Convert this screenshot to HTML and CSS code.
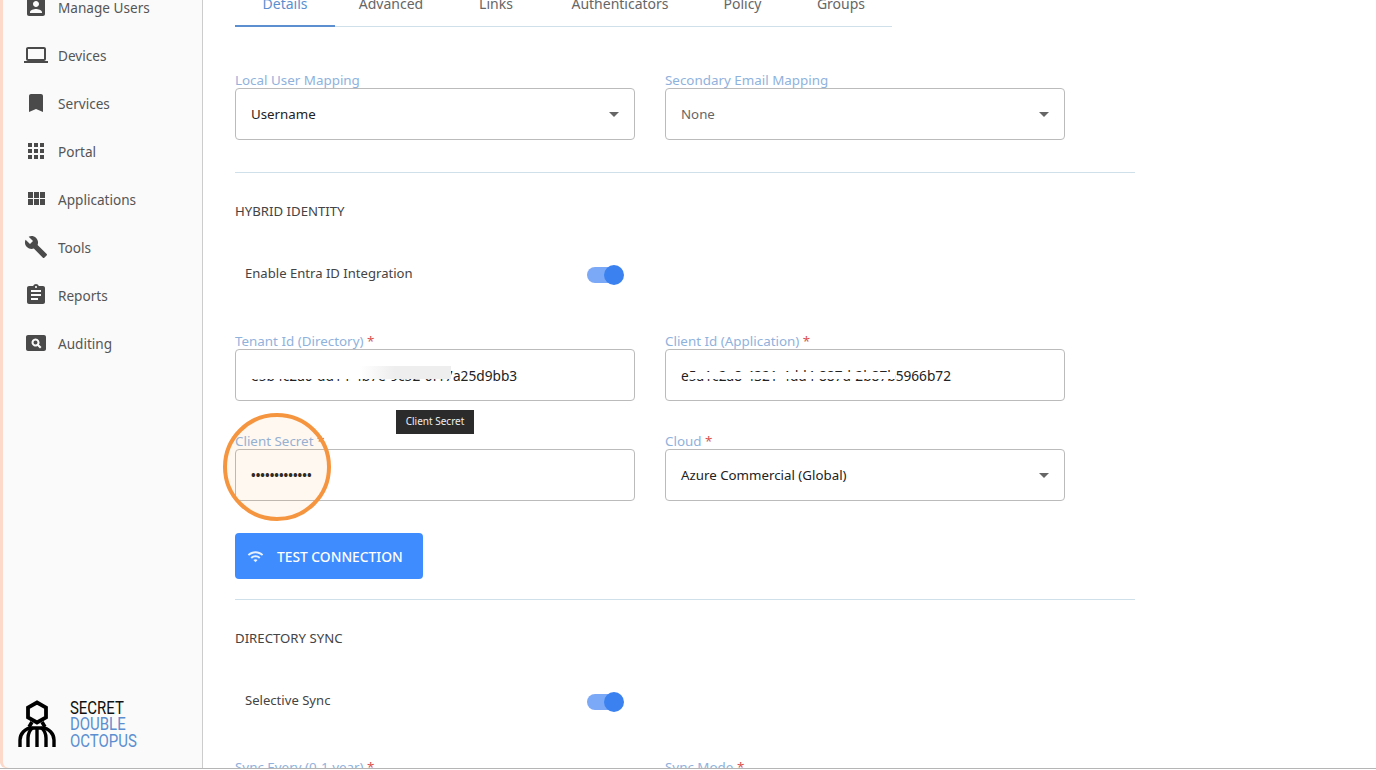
FILE: index.html
```html
<!DOCTYPE html>
<html lang="en">
<head>
    <meta charset="UTF-8">
    <meta name="viewport" content="width=device-width, initial-scale=1.0">
    <title>Directory Details</title>
    <link rel="stylesheet" href="styles.css">
</head>
<body>
    <div class="frame">
        <aside class="sidebar">
            <nav class="nav">
                <a class="nav-item"><svg class="nav-icon" viewBox="0 0 24 24"><path d="M3 5v14c0 1.1.89 2 2 2h14c1.1 0 2-.9 2-2V5c0-1.1-.9-2-2-2H5c-1.11 0-2 .9-2 2zm12 4c0 1.66-1.34 3-3 3s-3-1.34-3-3 1.34-3 3-3 3 1.34 3 3zm-9 8c0-2 4-3.1 6-3.1s6 1.1 6 3.1v1H6v-1z"/></svg>Manage Users</a>
                <a class="nav-item"><svg class="nav-icon" viewBox="0 0 24 24"><path d="M20 18c1.1 0 1.99-.9 1.99-2L22 6c0-1.1-.9-2-2-2H4c-1.1 0-2 .9-2 2v10c0 1.1.9 2 2 2H0v2h24v-2h-4zM4 6h16v10H4V6z"/></svg>Devices</a>
                <a class="nav-item"><svg class="nav-icon" viewBox="0 0 24 24"><path d="M17 3H7c-1.1 0-1.99.9-1.99 2L5 21l7-3 7 3V5c0-1.1-.9-2-2-2z"/></svg>Services</a>
                <a class="nav-item"><svg class="nav-icon" viewBox="0 0 24 24"><path d="M4 8h4V4H4v4zm6 12h4v-4h-4v4zm-6 0h4v-4H4v4zm0-6h4v-4H4v4zm6 0h4v-4h-4v4zm6-10v4h4V4h-4zm-6 4h4V4h-4v4zm6 6h4v-4h-4v4zm0 6h4v-4h-4v4z"/></svg>Portal</a>
                <a class="nav-item"><svg class="nav-icon" viewBox="0 0 24 24"><path d="M4 11h5V5H4v6zm0 7h5v-6H4v6zm6 0h5v-6h-5v6zm6 0h5v-6h-5v6zm-6-7h5V5h-5v6zm6-6v6h5V5h-5z"/></svg>Applications</a>
                <a class="nav-item"><svg class="nav-icon" viewBox="0 0 24 24"><path d="M22.7 19l-9.1-9.1c.9-2.3.4-5-1.5-6.9-2-2-5-2.4-7.4-1.3L9 6 6 9 1.6 4.7C.4 7.1.9 10.1 2.9 12.1c1.9 1.9 4.6 2.4 6.9 1.5l9.1 9.1c.4.4 1 .4 1.4 0l2.3-2.3c.5-.4.5-1.1.1-1.4z"/></svg>Tools</a>
                <a class="nav-item"><svg class="nav-icon" viewBox="0 0 24 24"><path d="M19 3h-4.18C14.4 1.84 13.3 1 12 1c-1.3 0-2.4.84-2.82 2H5c-1.1 0-2 .9-2 2v14c0 1.1.9 2 2 2h14c1.1 0 2-.9 2-2V5c0-1.1-.9-2-2-2zm-7 0c.55 0 1 .45 1 1s-.45 1-1 1-1-.45-1-1 .45-1 1-1zm2 14H7v-2h7v2zm3-4H7v-2h10v2zm0-4H7V7h10v2z"/></svg>Reports</a>
                <a class="nav-item"><svg class="nav-icon" viewBox="0 0 24 24"><path fill-rule="evenodd" d="M4 4h16c1.1 0 2 .9 2 2v12c0 1.1-.9 2-2 2H4c-1.1 0-2-.9-2-2V6c0-1.1.9-2 2-2zm7.5 3.5a4 4 0 1 0 2 7.46L16 17.5l1.5-1.5-2.54-2.5a4 4 0 0 0-3.46-6zm0 2a2 2 0 1 1 0 4 2 2 0 0 1 0-4z"/></svg>Auditing</a>
            </nav>
            <div class="logo">
                <svg class="logo-mark" viewBox="0 0 38 48" fill="none" stroke="#000">
                    <path stroke-width="3.8" d="M19 2.5l9 5v10l-9 5-9-5v-10z"/>
                    <path stroke-width="3.6" d="M14 22l-3 5M24 22l3 5"/>
                    <path stroke-width="3.4" d="M2 47v-7c0-6 5-12 12-12h10c7 0 12 6 12 12v7"/>
                    <path stroke-width="3.4" d="M10 47v-9c0-4 2-9 5-10M28 47v-9c0-4-2-9-5-10M19 47V28"/>
                </svg>
                <div class="logo-text">
                    <span class="logo-dark">SECRET</span>
                    <span>DOUBLE</span>
                    <span>OCTOPUS</span>
                </div>
            </div>
        </aside>

        <main class="main">
            <div class="tabs">
                <a class="tab active">Details</a>
                <a class="tab">Advanced</a>
                <a class="tab">Links</a>
                <a class="tab">Authenticators</a>
                <a class="tab">Policy</a>
                <a class="tab">Groups</a>
            </div>

            <div class="form-row first-row">
                <div class="field">
                    <label>Local User Mapping</label>
                    <div class="control">Username<span class="caret"></span></div>
                </div>
                <div class="field">
                    <label>Secondary Email Mapping</label>
                    <div class="control muted">None<span class="caret"></span></div>
                </div>
            </div>

            <hr class="divider">
            <h3 class="section-title">HYBRID IDENTITY</h3>
            <div class="toggle-row">
                <span class="toggle-label">Enable Entra ID Integration</span>
                <span class="toggle"><span class="thumb"></span></span>
            </div>

            <div class="form-row tenant-row">
                <div class="field">
                    <label>Tenant Id (Directory) <em>*</em></label>
                    <div class="control"><span class="secret-text">e5b4c2a0-dd14-4b7e-9c52-0f17a25d9bb3<span class="mask mask-tenant"></span></span></div>
                </div>
                <div class="field">
                    <label>Client Id (Application) <em>*</em></label>
                    <div class="control"><span class="secret-text">e5a1c2a8-4321-4dd4-887d-2b87b5966b72<span class="mask mask-client"></span></span></div>
                </div>
            </div>

            <div class="form-row secret-row">
                <div class="field">
                    <label>Client Secret <em>*</em></label>
                    <div class="control password">•••••••••••••</div>
                </div>
                <div class="field">
                    <label>Cloud <em>*</em></label>
                    <div class="control">Azure Commercial (Global)<span class="caret"></span></div>
                </div>
            </div>

            <button class="test-btn">
                <svg class="wifi-icon" viewBox="0 0 24 24"><path d="M1 9l2 2c4.97-4.97 13.03-4.97 18 0l2-2C16.93 2.93 7.08 2.93 1 9zm8 8l3 3 3-3c-1.65-1.66-4.34-1.66-6 0zm-4-4l2 2c2.76-2.76 7.24-2.76 10 0l2-2C15.14 9.14 8.87 9.14 5 13z"/></svg>
                TEST CONNECTION
            </button>

            <hr class="divider divider-low">
            <h3 class="section-title">DIRECTORY SYNC</h3>
            <div class="toggle-row">
                <span class="toggle-label">Selective Sync</span>
                <span class="toggle"><span class="thumb"></span></span>
            </div>

            <div class="form-row sync-row">
                <div class="field">
                    <label>Sync Every (0-1 year) <em>*</em></label>
                </div>
                <div class="field">
                    <label>Sync Mode <em>*</em></label>
                </div>
            </div>

            <div class="tooltip">Client Secret</div>
            <div class="highlight"></div>
        </main>
    </div>
</body>
</html>
```
FILE: styles.css
```css
html, body {
    margin: 0;
    padding: 0;
    height: 770px;
    overflow: hidden;
    background: #fff;
}
body {
    font-family: "Noto Sans", "Open Sans", sans-serif;
    font-size: 14px;
    color: #333;
}
.frame {
    display: flex;
    height: 769px;
    overflow: hidden;
    background: #fff;
    border-bottom: 1px solid #b5b5b5;
    box-sizing: border-box;
}
.sidebar {
    width: 200px;
    margin-left: 3px;
    flex-shrink: 0;
    box-sizing: border-box;
    display: flex;
    flex-direction: column;
    justify-content: space-between;
    background: #fafafa;
    border-right: 1px solid #ccc;
    border-bottom-left-radius: 6px;
    box-shadow: -3px 0 0 #fcd9c8;
}
.nav {
    margin-top: -17px;
}
.nav-item {
    display: flex;
    align-items: center;
    gap: 10px;
    height: 48px;
    padding-left: 21px;
    font-size: 13.6px;
    color: #555;
}
.nav-icon {
    width: 24px;
    height: 24px;
    fill: #4a4a4a;
    flex-shrink: 0;
}
.logo {
    display: flex;
    align-items: center;
    gap: 14px;
    padding: 0 0 19px 15px;
}
.logo-mark {
    width: 38px;
    height: 48px;
}
.logo-text {
    display: flex;
    flex-direction: column;
    font-family: "Roboto", sans-serif;
    font-size: 18px;
    line-height: 16.5px;
    color: #5b8fd0;
    transform: scaleX(0.83);
    transform-origin: left center;
}
.logo-dark {
    color: #111;
}
.main {
    position: relative;
    flex: 1;
    padding-left: 32px;
}
.tabs {
    display: grid;
    grid-template-columns: 100px 112px 98px 150px 95px 102px;
    width: 657px;
    height: 37px;
    margin-top: -10px;
    box-sizing: border-box;
    border-bottom: 1px solid #cfe0ea;
}
.tab {
    height: 37px;
    line-height: 28px;
    text-align: center;
    color: #666;
    box-sizing: border-box;
}
.tab.active {
    color: #5b8fd0;
    border-bottom: 2px solid #5b8fd0;
}
.form-row {
    display: flex;
    gap: 30px;
}
.first-row { margin-top: 45px; }
.tenant-row { margin-top: 34px; }
.secret-row { margin-top: 32px; }
.sync-row { margin-top: 33px; }
.field {
    width: 400px;
}
.field label {
    display: block;
    height: 16px;
    line-height: 16px;
    font-size: 13.4px;
    color: #8fb2dd;
}
.field em {
    color: #d9534f;
    font-style: normal;
}
.control {
    position: relative;
    display: flex;
    align-items: center;
    height: 52px;
    padding: 0 15px;
    box-sizing: border-box;
    background: #fff;
    border: 1px solid #bbb;
    border-radius: 4px;
    font-size: 13.3px;
    color: #222;
}
.control.muted {
    color: #666;
}
.control.password {
    font-size: 12.4px;
    font-weight: 700;
}
.caret {
    position: absolute;
    right: 15px;
    top: 23px;
    border-left: 5px solid transparent;
    border-right: 5px solid transparent;
    border-top: 5px solid #666;
}
.secret-text {
    position: relative;
    font-size: 13.7px;
}
.mask {
    position: absolute;
    top: 0;
    height: 13px;
    background: #fff;
}
.mask-tenant {
    left: -2px;
    width: 202px;
    background: linear-gradient(90deg, #fff 55%, #eee 72%, #eee 100%);
}
.mask-client {
    left: 8px;
    top: 6px;
    width: 206px;
    height: 7px;
}
.divider {
    width: 900px;
    height: 1px;
    margin: 32px 0 0;
    border: 0;
    background: #cfe0ea;
}
.divider-low {
    margin-top: 20px;
}
.section-title {
    margin: 28px 0 0;
    height: 20px;
    line-height: 20px;
    font-size: 13.2px;
    font-weight: 400;
    color: #444;
}
.toggle-row {
    display: flex;
    align-items: center;
    justify-content: space-between;
    width: 376px;
    height: 48px;
    margin-top: 30px;
    padding-left: 10px;
    font-size: 13.1px;
    color: #444;
}
.toggle-label {
    margin-bottom: 4px;
}
.toggle {
    position: relative;
    width: 34px;
    height: 16px;
    border-radius: 8px;
    background: #7ca9f7;
}
.thumb {
    position: absolute;
    right: -3px;
    top: -2px;
    width: 20px;
    height: 20px;
    border-radius: 50%;
    background: #3b82f0;
}
.test-btn {
    display: flex;
    align-items: center;
    gap: 13px;
    width: 188px;
    height: 46px;
    margin-top: 32px;
    padding: 0 0 0 12px;
    border: none;
    border-radius: 4px;
    background: #3f8cff;
    color: #fff;
    font-family: inherit;
    font-size: 13.8px;
    font-weight: 500;
}
.wifi-icon {
    width: 17px;
    height: 17px;
    fill: #e6f0ff;
}
.tooltip {
    position: absolute;
    left: 193px;
    top: 410px;
    width: 78px;
    height: 24px;
    line-height: 22px;
    text-align: center;
    font-size: 10px;
    color: #eee;
    background: #2b2b2b;
}
.highlight {
    position: absolute;
    left: 20px;
    top: 413px;
    width: 108px;
    height: 108px;
    box-sizing: border-box;
    border: 4px solid #f6953f;
    border-radius: 50%;
    background: rgba(246, 149, 63, 0.07);
}
```
